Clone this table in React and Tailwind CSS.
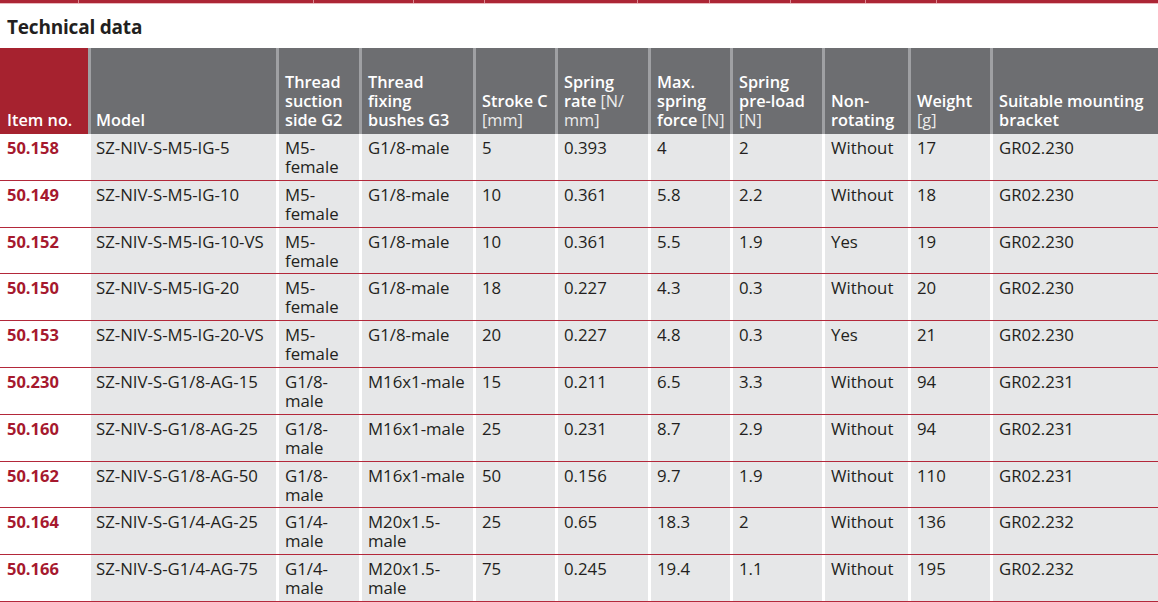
const cols = 'grid grid-cols-[88px_185px_80px_111px_79px_90px_79px_89px_83px_79px_1fr] gap-x-[3px]'

const topSegs = [78, 234, 99, 70, 152, 71, 80, 74, 70]

const rows = [
  ['50.158', 'SZ-NIV-S-M5-IG-5', ['M5-', 'female'], 'G1/8-male', '5', '0.393', '4', '2', 'Without', '17', 'GR02.230'],
  ['50.149', 'SZ-NIV-S-M5-IG-10', ['M5-', 'female'], 'G1/8-male', '10', '0.361', '5.8', '2.2', 'Without', '18', 'GR02.230'],
  ['50.152', 'SZ-NIV-S-M5-IG-10-VS', ['M5-', 'female'], 'G1/8-male', '10', '0.361', '5.5', '1.9', 'Yes', '19', 'GR02.230'],
  ['50.150', 'SZ-NIV-S-M5-IG-20', ['M5-', 'female'], 'G1/8-male', '18', '0.227', '4.3', '0.3', 'Without', '20', 'GR02.230'],
  ['50.153', 'SZ-NIV-S-M5-IG-20-VS', ['M5-', 'female'], 'G1/8-male', '20', '0.227', '4.8', '0.3', 'Yes', '21', 'GR02.230'],
  ['50.230', 'SZ-NIV-S-G1/8-AG-15', ['G1/8-', 'male'], 'M16x1-male', '15', '0.211', '6.5', '3.3', 'Without', '94', 'GR02.231'],
  ['50.160', 'SZ-NIV-S-G1/8-AG-25', ['G1/8-', 'male'], 'M16x1-male', '25', '0.231', '8.7', '2.9', 'Without', '94', 'GR02.231'],
  ['50.162', 'SZ-NIV-S-G1/8-AG-50', ['G1/8-', 'male'], 'M16x1-male', '50', '0.156', '9.7', '1.9', 'Without', '110', 'GR02.231'],
  ['50.164', 'SZ-NIV-S-G1/4-AG-25', ['G1/4-', 'male'], ['M20x1.5-', 'male'], '25', '0.65', '18.3', '2', 'Without', '136', 'GR02.232'],
  ['50.166', 'SZ-NIV-S-G1/4-AG-75', ['G1/4-', 'male'], ['M20x1.5-', 'male'], '75', '0.245', '19.4', '1.1', 'Without', '195', 'GR02.232'],
]

// header: each line is [bold part, light part]
const headers = [
  [['Item no.', '']],
  [['Model', '']],
  [['Thread', ''], ['suction', ''], ['side G2', '']],
  [['Thread', ''], ['fixing', ''], ['bushes G3', '']],
  [['Stroke C', ''], ['', '[mm]']],
  [['Spring', ''], ['rate ', '[N/'], ['', 'mm]']],
  [['Max.', ''], ['spring', ''], ['force ', '[N]']],
  [['Spring', ''], ['pre-load', ''], ['', '[N]']],
  [['Non-', ''], ['rotating', '']],
  [['Weight', ''], ['', '[g]']],
  [['Suitable mounting', ''], ['bracket', '']],
]

function Cell({ value }) {
  if (Array.isArray(value)) {
    return value.map((l, i) => <div key={i}>{l}</div>)
  }
  return value
}

export default function App() {
  return (
    <div className="w-[1158px] min-h-[602px] bg-white text-[#231f20] font-['Open_Sans','Noto_Sans',sans-serif] overflow-hidden">
      {/* red strip carried over from the previous table */}
      <div className="flex gap-px bg-[#d98a93] h-[3px]">
        {topSegs.map((w, i) => (
          <div key={i} className="bg-[#ac2535] shrink-0" style={{ width: w }} />
        ))}
        <div className="bg-[#ac2535] flex-1" />
      </div>
      <div className="h-px bg-[#e9b9be]" />

      <div className="h-[44px] flex items-center pl-[7px] pt-[2px]">
        <h2 className="text-[19px] font-bold tracking-[-0.2px]">Technical data</h2>
      </div>

      {/* header */}
      <div className={`${cols} bg-[#9fa0a3] h-[86px] text-white font-semibold text-[16.3px] leading-[19px]`}>
        {headers.map((lines, i) => (
          <div
            key={i}
            className={`flex flex-col justify-end pb-[4px] ${i === 0 ? 'bg-[#a6222f] pl-[7px]' : i === 1 ? 'bg-[#6d6e71] pl-[5px]' : 'bg-[#6d6e71] pl-[6px]'}`}
          >
            {lines.map(([b, l], j) => (
              <div key={j} className="whitespace-nowrap">
                {b}
                {l && <span className="font-normal text-[#ececec]">{l}</span>}
              </div>
            ))}
          </div>
        ))}
      </div>

      {/* body */}
      {rows.map((r, i) => (
        <div key={i} className={`${cols} bg-white border-b border-[#b3283a] h-[46.8px] text-[16.8px] leading-[19px]`}>
          {r.map((v, j) => (
            <div
              key={j}
              className={
                j === 0
                  ? 'bg-white pl-[7px] pt-[4px] font-bold text-[16.5px] text-[#a6192e]'
                  : j === 1
                    ? 'bg-[#e6e7e8] pl-[5px] pt-[4px] whitespace-nowrap'
                    : 'bg-[#e6e7e8] pl-[6px] pt-[4px] whitespace-nowrap'
              }
            >
              <Cell value={v} />
            </div>
          ))}
        </div>
      ))}
    </div>
  )
}
